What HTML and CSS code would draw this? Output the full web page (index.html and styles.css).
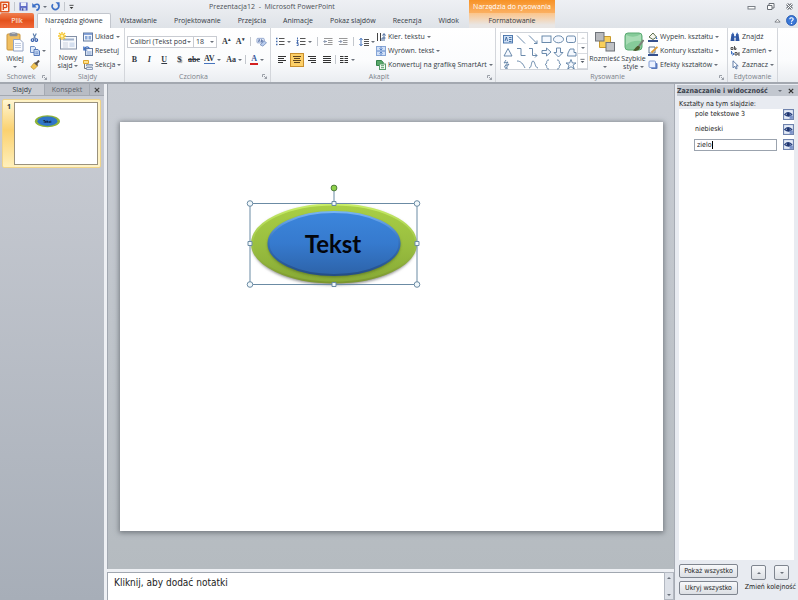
FILE: index.html
```html
<!DOCTYPE html>
<html lang="pl">
<head>
<meta charset="utf-8">
<title>Prezentacja12 - Microsoft PowerPoint</title>
<link rel="stylesheet" href="styles.css">
</head>
<body>
<div class="app">
  <header class="header">
    <div class="titlebar">
      <div class="quick">
        <svg class="logo" viewBox="0 0 10 12"><rect x="0" y="0.5" width="9.5" height="11" rx="1" fill="#e2571f"/><rect x="1.5" y="2" width="6.5" height="8" fill="#fff3ea"/><path d="M3.3 9V3.4h2a1.6 1.6 0 0 1 0 3.2h-2" fill="none" stroke="#d9481a" stroke-width="1.3"/></svg>
        <span class="sep"></span>
        <button aria-label="Zapisz"><svg viewBox="0 0 10 10" width="9" height="9"><path d="M.5.5h9v9h-9z" fill="#5a66c4"/><path d="M2 .5h6v4H2z" fill="#eef1fb"/><path d="M2.5 6.5h5v3h-5z" fill="#c9d0ee"/><path d="M3.5 7h1.3v2.5H3.5z" fill="#34408f"/></svg></button>
        <button aria-label="Cofnij"><svg viewBox="0 0 10 10" width="9" height="9"><path d="M2 4.5C4 1.5 8 1.8 8 5.2 8 7.2 6.5 8.8 4.8 9.3" fill="none" stroke="#3c6fc6" stroke-width="1.8"/><path d="M.3 1.2v5h5z" fill="#3c6fc6"/></svg><i class="dn"></i></button>
        <button aria-label="Powtórz"><svg viewBox="0 0 10 10" width="9" height="9"><path d="M2.2 2.4A3.6 3.6 0 1 0 7.8 2.6" fill="none" stroke="#3c6fc6" stroke-width="1.8"/><path d="M5 .2h4.5v4.5z" fill="#3c6fc6"/></svg></button>
        <span class="sep"></span>
        <button aria-label="Dostosuj"><svg viewBox="0 0 6 6" width="5" height="6"><path d="M.5 1h5" stroke="#333"/><path d="M.8 3h4.4L3 5.4z" fill="#333"/></svg></button>
      </div>
      <h1>Prezentacja12&nbsp; -&nbsp; Microsoft PowerPoint</h1>
    </div>
    <div class="context">Narzędzia do rysowania</div>
    <div class="window">
      <button aria-label="Minimalizuj"><svg viewBox="0 0 9 9" width="9" height="9"><rect x="1" y="4.5" width="7" height="2.5" fill="#fff" stroke="#7b8087"/></svg></button>
      <button aria-label="Przywróć"><svg viewBox="0 0 9 9" width="9" height="9"><path d="M3 1.5h5v4.5H3z" fill="#fff" stroke="#686d74"/><path d="M1.5 3.5h4.5v4H1.5z" fill="#fff" stroke="#686d74"/></svg></button>
      <button aria-label="Zamknij"><svg viewBox="0 0 9 9" width="9" height="9"><path d="M2 2l5 5M7 2L2 7" stroke="#72777e" stroke-width="2.8"/><path d="M2 2l5 5M7 2L2 7" stroke="#fff" stroke-width="1"/></svg></button>
    </div>
    <nav class="tabs">
      <button class="file">Plik</button>
      <button class="on">Narzędzia główne</button>
      <button>Wstawianie</button><button>Projektowanie</button><button>Przejścia</button><button>Animacje</button><button>Pokaz slajdów</button><button>Recenzja</button><button>Widok</button>
    </nav>
    <button class="format">Formatowanie</button>
    <div class="help">
      <button aria-label="Zwiń wstążkę"><svg viewBox="0 0 8 8" width="7" height="7"><path d="M1 5.8L4 2.5l3 3.3z" fill="#fff" stroke="#666b72" stroke-width=".9"/></svg></button>
      <button aria-label="Pomoc"><svg viewBox="0 0 12 12" width="11" height="11"><circle cx="6" cy="6" r="5.4" fill="#3b78d8" stroke="#255aaf"/><path d="M4.2 4.6C4.2 2.4 8 2.5 7.8 4.7 7.7 5.9 6.1 5.9 6 7.4M6 8.4v1.3" fill="none" stroke="#fff" stroke-width="1.3"/></svg></button>
    </div>
  </header>

  <section class="ribbon" aria-label="Wstążka">
    <div class="group g-clip">
      <div class="tools">
        <button class="big"><svg viewBox="0 0 18 20" width="18" height="20"><rect x="1" y="2" width="13" height="16" rx="1" fill="#f0bf61" stroke="#c9953f"/><rect x="3.5" y=".8" width="8" height="3.5" rx="1" fill="#8c8f97"/><rect x="5.5" y="0" width="4" height="2" rx="1" fill="#b7bac1"/><path d="M7.500 7.500h6.500l3 3v8.500H7.500z" fill="#fbfcff" stroke="#93a4c4"/><path d="M9 11.500h6M9 13.500h6M9 15.500h6" stroke="#b3bfd6" stroke-width=".8"/></svg><span>Wklej</span><i class="dn"></i></button>
        <div class="stack">
          <button aria-label="Wytnij"><svg viewBox="0 0 10 10" width="9" height="9"><path d="M3.500 .5L6 6.500M7 .5L4 6.500" stroke="#5d7fae" stroke-width="1.300"/><circle cx="2.800" cy="7.800" r="1.500" fill="none" stroke="#2c56a8" stroke-width="1.200"/><circle cx="7" cy="7.800" r="1.500" fill="none" stroke="#2c56a8" stroke-width="1.200"/></svg></button>
          <button aria-label="Kopiuj"><svg viewBox="0 0 10 10" width="10" height="10"><path d="M.5.5h4l1 1v5h-5z" fill="#dfe9f8" stroke="#6b8cc4"/><path d="M4 3.500h4l1.500 1.500v4.500H4z" fill="#c8daf5" stroke="#5478b8"/><path d="M5.300 6h3M5.300 7.700h3" stroke="#5478b8" stroke-width=".7"/></svg><i class="dn"></i></button>
          <button aria-label="Malarz formatów"><svg viewBox="0 0 10 10" width="10" height="10"><path d="M6 4l3-3.500" stroke="#5b5146" stroke-width="2"/><path d="M4 3l3.500 3L4 9.500.8 7z" fill="#f0c454" stroke="#c08f2b" stroke-width=".7"/><path d="M4.600 2.500l3.200 2.900" stroke="#5b5146" stroke-width="1.400"/></svg></button>
        </div>
      </div>
      <div class="caption"><span>Schowek</span><svg class="launch"><use href="#launch"/></svg></div>
    </div>

    <div class="group g-slides">
      <div class="tools">
        <button class="big"><svg viewBox="0 0 20 19" width="20" height="19"><rect x="2.500" y="4.500" width="16" height="12.500" fill="#f7f9fc" stroke="#8390a6"/><path d="M5 7.500h11" stroke="#9fb0cb" stroke-width="2"/><path d="M5 11h5M5 13h5M5 15h5" stroke="#c1cad9" stroke-width=".8"/><rect x="11.500" y="10.500" width="5" height="4.500" fill="#d4dfef"/><path d="M4 0v8M0 4h8M1 1l6 6M7 1L1 7" stroke="#f6c52e" stroke-width="1.400"/><circle cx="4" cy="4" r="1.500" fill="#fff5b8"/></svg><span>Nowy</span><span>slajd <i class="dn"></i></span></button>
        <div class="stack">
          <button><svg viewBox="0 0 10 10" width="10" height="10"><rect x=".5" y="1" width="9" height="8" fill="#f2f6fc" stroke="#637a9f"/><path d="M1 2h8" stroke="#6b8fcd" stroke-width="1.600"/><path d="M2 4h2.500v3.500H2zM5.500 4H8v3.500H5.500z" fill="#8aa9d8"/></svg>Układ <i class="dn"></i></button>
          <button><svg viewBox="0 0 10 10" width="10" height="10"><rect x="2.500" y="2.500" width="7" height="7" fill="#f2f6fc" stroke="#637a9f"/><path d="M3.500 6h5M3.500 8h5" stroke="#7596cb"/><path d="M.8.5v3.500h3.500M1 3.500C2.500 0 6 .4 6.500 3" fill="none" stroke="#3f6fc0" stroke-width="1.200"/></svg>Resetuj</button>
          <button><svg viewBox="0 0 10 10" width="10" height="10"><path d="M.5.5h5v3h-5z" fill="#ffe28b" stroke="#dfa62e"/><path d="M1.500 4v4.500h2" fill="none" stroke="#777"/><path d="M3.500 4.500h6v1.500h-6zM3.500 7.500h6V9.500h-6z" fill="#e8eef8" stroke="#7488a8" stroke-width=".8"/></svg>Sekcja <i class="dn"></i></button>
        </div>
      </div>
      <div class="caption"><span>Slajdy</span></div>
    </div>

    <div class="group g-font">
      <div class="tools rows">
        <div class="row">
          <span class="box face"><select aria-label="Czcionka"><option>Calibri (Tekst pod</option></select><i class="dn"></i></span><span class="box size"><select aria-label="Rozmiar czcionki"><option>18</option></select><i class="dn"></i></span>
          <button class="glyph grow" aria-label="Zwiększ czcionkę">A<sup>▴</sup></button><button class="glyph shrink" aria-label="Zmniejsz czcionkę">A<sup>▾</sup></button><span class="sep"></span>
          <button aria-label="Wyczyść formatowanie"><svg viewBox="0 0 12 10" width="11" height="10"><rect x="1" y="1" width="8" height="5" rx="1" fill="#e2e9f6" stroke="#7a93c2" stroke-width=".8"/><path d="M2.500 5l1-3 1 3M6 2v3h1.500V3.500H6" fill="none" stroke="#47649d" stroke-width=".8"/><path d="M4.500 8l4.500-4 2.500 1.800L7.500 9.500z" fill="#b9cdef" stroke="#7189b8" stroke-width=".8"/></svg></button>
        </div>
        <div class="row second">
          <button class="glyph">B</button><button class="glyph it">I</button><button class="glyph un">U</button><button class="glyph sh">S</button><button class="glyph st">abc</button><button class="glyph wide"><span class="av">AV</span><i class="dn"></i></button><button class="glyph wide">Aa<i class="dn"></i></button><span class="sep"></span><button class="glyph wide"><span class="color">A</span><i class="dn"></i></button>
        </div>
      </div>
      <div class="caption"><span>Czcionka</span><svg class="launch"><use href="#launch"/></svg></div>
    </div>

    <div class="group g-para">
      <div class="tools">
        <div class="rows">
          <div class="row">
            <button aria-label="Punktory"><svg class="ic"><use href="#bullets"/></svg><i class="dn"></i></button>
            <button aria-label="Numerowanie"><svg class="ic"><use href="#numbers"/></svg><i class="dn"></i></button><span class="sep"></span>
            <button aria-label="Zmniejsz wcięcie"><svg class="ic"><use href="#outdent"/></svg></button>
            <button aria-label="Zwiększ wcięcie"><svg class="ic"><use href="#indent"/></svg></button><span class="sep"></span>
            <button aria-label="Interlinia"><svg class="ic" viewBox="0 0 10 10"><path d="M2 1.500v7M.5 3L2 1.200 3.500 3M.5 7L2 8.800 3.500 7" fill="none" stroke="#4674bd"/><path d="M5 2.500h5M5 4.500h5M5 6.500h5M5 8.500h5" stroke="#555" stroke-width="1"/></svg><i class="dn"></i></button>
          </div>
          <div class="row second align">
            <button aria-label="Do lewej"><svg class="ic" viewBox="0 0 10 10"><path d="M1 1.500h8M1 3.500h6M1 5.500h8M1 7.500h5" stroke="#333"/></svg></button>
            <button aria-label="Do środka" class="sel"><svg class="ic" viewBox="0 0 10 10"><path d="M1 1.500h8M2 3.500h6M1 5.500h8M2 7.500h6" stroke="#5e4520"/></svg></button>
            <button aria-label="Do prawej"><svg class="ic" viewBox="0 0 10 10"><path d="M1 1.500h8M3 3.500h6M1 5.500h8M4 7.500h5" stroke="#333"/></svg></button>
            <button aria-label="Wyjustuj"><svg class="ic" viewBox="0 0 10 10"><path d="M1 1.500h8M1 3.500h8M1 5.500h8M1 7.500h8" stroke="#333"/></svg></button><span class="sep"></span>
            <button class="wide" aria-label="Kolumny"><svg class="ic" viewBox="0 0 10 10"><path d="M1 1.500h3.500M1 3.500h3.500M1 5.500h3.500M1 7.500h3.500M5.500 1.500H9M5.500 3.500H9M5.500 5.500H9M5.500 7.500H9" stroke="#333"/></svg><i class="dn"></i></button>
          </div>
        </div>
        <div class="stack">
          <button><svg viewBox="0 0 10 10" width="10" height="10"><path d="M1.500 1v8M4.500 1v8" stroke="#444"/><path d="M8 9V2M6.500 3.500L8 1.500l1.500 2M6 9V6h3.500" fill="none" stroke="#496a9c"/></svg>Kier. tekstu <i class="dn"></i></button>
          <button><svg viewBox="0 0 10 10" width="10" height="10"><rect x=".5" y=".5" width="9" height="9" fill="#d2e1f7" stroke="#86a5d6"/><path d="M5 .5v3M5 9.500v-3M3.500 2.500L5 4l1.500-1.500M3.500 7.500L5 6l1.500 1.500M1 5h8" fill="none" stroke="#4f7bc2" stroke-width=".9"/></svg>Wyrówn. tekst <i class="dn"></i></button>
          <button><svg viewBox="0 0 10 10" width="10" height="10"><path d="M.5.5h5l2 2.500-2 2.500h-5z" fill="#58a869" stroke="#33814a"/><rect x="3.500" y="4" width="6" height="5.500" fill="#f3faf3" stroke="#5a9d6c"/><path d="M5 5.700h3M5 7.700h3" stroke="#5a9d6c"/></svg>Konwertuj na grafikę SmartArt <i class="dn"></i></button>
        </div>
      </div>
      <div class="caption"><span>Akapit</span><svg class="launch"><use href="#launch"/></svg></div>
    </div>

    <div class="group g-draw">
      <div class="tools">
        <div class="gallery">
          <svg viewBox="0 0 76 38" width="76" height="38" fill="#f5f9ff" stroke="#5b7ea3" stroke-width=".9">
            <rect x="2.500" y="2.500" width="9" height="7.500" fill="#cfe0f5" stroke="#426fa8"/><path d="M4 8l1.300-4 1.300 4M8 4.500h2.500M8 6.500h2.500M8 8.500h2.500" fill="none" stroke="#2b5a96" stroke-width=".8"/>
            <path d="M16 2.500l8 8M28 2.500l8 8M36 7.500v3h-3" fill="none"/><rect x="41" y="3" width="9" height="6.500"/><ellipse cx="57.500" cy="6.300" rx="5" ry="3.500"/><rect x="65.500" y="3" width="9" height="6.500" rx="1.800"/>
            <path d="M7 15.500l4 7.500H3z"/><path d="M16 15.500h4v7h4.500M28 15.500h3.500v7H36M34 20.500l2 2-2 2" fill="none"/><path d="M41 17.500h4.500V15l4.500 4-4.500 4v-2.500H41zM55.500 15h4v4.500H62L57.500 24 53 19.500h2.500zM67 20l2-4h4v3.500h2V23h-8.500z"/>
            <path d="M5 27l-2 3 4-1-3 4 4-2-3 4M3.500 33l1 2.500 2.500-.5" fill="none"/><path d="M16 28c4 0 6 3 8 7M28 35c3 0 2-7 4-7s2 7 5 7M48 27c-3 0-2 2-2.500 3.500L44 31.500l1.500 1c.5 1.500-.5 3.500 2.500 3.500M56 27c3 0 2 2 2.500 3.500l1.500 1-1.500 1C58 34 59 36 56 36" fill="none"/><path d="M70 26.500l1.400 3.500h3.600l-3 2.200 1.200 3.800-3.200-2.300-3.200 2.300 1.200-3.800-3-2.200h3.600z"/>
          </svg>
          <div class="scroller"><button aria-label="W górę" disabled><i class="up"></i></button><button aria-label="W dół"><i class="dn"></i></button><button aria-label="Więcej"><svg viewBox="0 0 6 6" width="5" height="6"><path d="M.5 1h5" stroke="#555c66"/><path d="M.8 3h4.400L3 5.400z" fill="#555c66"/></svg></button></div>
        </div>
        <button class="big"><svg viewBox="0 0 20 20" width="20" height="20"><path d="M4.500 4.500h11v11h-11z" fill="#f8cf5b" stroke="#c99a2c"/><rect x=".5" y=".5" width="8.500" height="8.500" fill="#b8babe" stroke="#6f7379"/><rect x="11" y="10.500" width="8.500" height="8.500" fill="#c0c2c6" stroke="#6f7379"/></svg><span>Rozmieść</span><i class="dn"></i></button>
        <button class="big"><svg viewBox="0 0 20 20" width="20" height="20"><rect x="1" y="1" width="17" height="17" rx="3" fill="#86cb9a" stroke="#5aaa73"/><path d="M2 3q8 4 15-1v7Q8 8 2 13z" fill="#a8dcb5"/><path d="M19.500 8l-6 8" stroke="#7c8079" stroke-width="2"/><path d="M14.500 14c-2-.5-3 2.500-5.500 4.500 4 1.500 7-1 7-3.500z" fill="#4b5c2c"/></svg><span>Szybkie</span><span>style <i class="dn"></i></span></button>
        <div class="stack">
          <button><svg viewBox="0 0 10 10" width="10" height="10"><path d="M1 5l4-4 3.500 4L5 7.500z" fill="#f6f6ee" stroke="#5d6f4d"/><path d="M8 4l1.500 3H8z" fill="#3870c4"/><path d="M0 9h10" stroke="#35508e" stroke-width="2"/></svg>Wypełn. kształtu <i class="dn"></i></button>
          <button><svg viewBox="0 0 10 10" width="10" height="10"><path d="M1 1h6v6H1z" fill="#fff" stroke="#5f748f"/><path d="M3.500 6.500L9.500 .8" stroke="#df9b33" stroke-width="1.800"/><path d="M0 9h10" stroke="#35508e" stroke-width="2"/></svg>Kontury kształtu <i class="dn"></i></button>
          <button><svg viewBox="0 0 10 10" width="10" height="10"><rect x="3" y="3" width="6.500" height="6" rx="1" fill="#5878bd"/><rect x="1" y="1" width="6.500" height="6.500" rx="1" fill="#eaf1ff" stroke="#7f9bd4"/></svg>Efekty kształtów <i class="dn"></i></button>
        </div>
      </div>
      <div class="caption"><span>Rysowanie</span><svg class="launch"><use href="#launch"/></svg></div>
    </div>

    <div class="group g-edit">
      <div class="tools">
        <div class="stack">
          <button><svg viewBox="0 0 10 10" width="10" height="10"><path d="M1.500 2h2.500L4.500 9H.5zM6 2h2.500l1 7h-4z" fill="#2f57a3"/><path d="M4 4h2v2H4zM2 .8h1.500v1.500H2zM6.500.8H8v1.500H6.500z" fill="#5b83c8"/></svg>Znajdź</button>
          <button><svg viewBox="0 0 10 10" width="10" height="10"><path d="M1 3.500h2v-2H1v2M4.500 0v3.500h1.500V2H4.500M5 6.500h2V9H5zM8 9V7h2M8 9h2" fill="none" stroke="#444" stroke-width=".9"/><path d="M1.500 5v3h2M2.500 6.500L4 8 2.500 9.500" fill="none" stroke="#3f71c1"/></svg>Zamień <i class="dn"></i></button>
          <button><svg viewBox="0 0 10 10" width="10" height="10"><path d="M3 .8v7l1.800-1.500L6 9l1.200-.6L6 5.900h2.200z" fill="#fff" stroke="#51719f" stroke-width=".9"/></svg>Zaznacz <i class="dn"></i></button>
        </div>
      </div>
      <div class="caption"><span>Edytowanie</span></div>
    </div>
  </section>

  <main class="work">
    <aside class="slides">
      <div class="sidetabs"><button class="on">Slajdy</button><button>Konspekt</button><button class="close" aria-label="Zamknij panel"><svg viewBox="0 0 6 6" width="6" height="6"><path d="M.8.8l4.400 4.400M5.200.8L.8 5.200" stroke="#444" stroke-width="1.200"/></svg></button></div>
      <div class="thumb"><b>1</b>
        <svg viewBox="0 0 543 409"><rect width="543" height="409" fill="#fff"/><ellipse cx="214" cy="122" rx="84" ry="40" fill="#8fb43a"/><ellipse cx="214" cy="122" rx="67" ry="32" fill="#2f75c8"/><text x="214" y="131" class="tekst">Tekst</text></svg>
      </div>
    </aside>
    <div class="editor">
      <div class="canvas">
        <svg class="slide" viewBox="0 0 543 409">
          <defs>
            <linearGradient id="green" x2="0" y2="1"><stop offset="0" stop-color="#a9cf45"/><stop offset=".5" stop-color="#9abf40"/><stop offset="1" stop-color="#87a935"/></linearGradient>
            <linearGradient id="blue" x2="0" y2="1"><stop offset="0" stop-color="#3c86dc"/><stop offset=".5" stop-color="#367ace"/><stop offset="1" stop-color="#2d63a9"/></linearGradient>
            <linearGradient id="rimg" x2="0" y2="1"><stop offset="0" stop-color="#c9ee68"/><stop offset=".5" stop-color="#9fc548"/><stop offset="1" stop-color="#7b962e"/></linearGradient>
            <linearGradient id="rimb" x2="0" y2="1"><stop offset="0" stop-color="#76b3f4"/><stop offset=".5" stop-color="#346fba"/><stop offset="1" stop-color="#244e87"/></linearGradient>
            <filter id="soft" x="-10%" y="-10%" width="120%" height="130%"><feGaussianBlur stdDeviation="1.500"/></filter>
          </defs>
          <ellipse cx="214" cy="123" rx="82" ry="40" fill="#888" filter="url(#soft)"/>
          <ellipse cx="214" cy="121.500" rx="82" ry="39" fill="url(#green)" stroke="url(#rimg)" stroke-width="2"/>
          <ellipse cx="214" cy="123" rx="66" ry="32" fill="#5b7626" filter="url(#soft)"/>
          <ellipse cx="214" cy="121.500" rx="65.500" ry="31.500" fill="url(#blue)" stroke="url(#rimb)" stroke-width="2"/>
          <text x="213" y="131" class="tekst">Tekst</text>
          <g fill="#f1f8fb" stroke="#6b8ba4" stroke-width="1">
            <path d="M130 81.500h167v81H130zM214 81.500V69" fill="none"/>
            <circle cx="130" cy="81.500" r="2.800"/><circle cx="297" cy="81.500" r="2.800"/><circle cx="130" cy="162.500" r="2.800"/><circle cx="297" cy="162.500" r="2.800"/>
            <path d="M212 79.500h4v4h-4zM212 160.500h4v4h-4zM128 119.500h4v4h-4zM295 119.500h4v4h-4z"/>
            <circle cx="214" cy="66" r="2.900" fill="#8fd14a" stroke="#4f7d3c"/>
          </g>
        </svg>
      </div>
      <div class="notes"><p>Kliknij, aby dodać notatki</p><div class="bar"><i class="up"></i><i class="dn"></i></div></div>
    </div>
    <aside class="pane">
      <h2>Zaznaczanie i widoczność <span><i class="dn"></i><svg viewBox="0 0 6 6" width="6" height="6"><path d="M.8.8l4.400 4.400M5.200.8L.8 5.200" stroke="#333" stroke-width="1.200"/></svg></span></h2>
      <h3>Kształty na tym slajdzie:</h3>
      <ul>
        <li><span>pole tekstowe 3</span><button aria-label="Widoczność"><svg><use href="#eye"/></svg></button></li>
        <li><span>niebieski</span><button aria-label="Widoczność"><svg><use href="#eye"/></svg></button></li>
        <li class="edit"><label><input value="zielo" aria-label="Nazwa kształtu" size="5"><i class="cursor"></i></label><button aria-label="Widoczność"><svg><use href="#eye"/></svg></button></li>
      </ul>
      <footer>
        <div class="all"><button>Pokaż wszystko</button><button>Ukryj wszystko</button></div>
        <div class="order"><div><button aria-label="Do przodu"><i class="up"></i></button><button aria-label="Do tyłu"><i class="dn"></i></button></div><span>Zmień kolejność</span></div>
      </footer>
    </aside>
  </main>
</div>

<svg class="defs" aria-hidden="true">
  <symbol id="launch" viewBox="0 0 5 5"><path d="M.5 3V.5H3M2 2l2.500 2.500M4.500 2.500v2h-2" fill="none" stroke="#858b94" stroke-width=".8"/></symbol>
  <symbol id="bullets" viewBox="0 0 10 10"><path d="M1 1.500h1.500M1 4.500h1.500M1 7.500h1.500" stroke="#456cab" stroke-width="1.500"/><path d="M4 1.500h5.500M4 4.500h5.500M4 7.500h5.500" stroke="#555"/></symbol>
  <symbol id="numbers" viewBox="0 0 10 10"><path d="M1.500.5v2M.7 3.500h1.500L.8 5.500h1.500M.7 6.500h1.500v2H.7" fill="none" stroke="#355fa5" stroke-width=".9"/><path d="M4 1.500h5.500M4 4.500h5.500M4 7.500h5.500" stroke="#555"/></symbol>
  <symbol id="outdent" viewBox="0 0 10 10"><path d="M1 1.500h8.500M5 3.500h4.500M5 5.500h4.500M1 7.500h8.500" stroke="#999"/><path d="M4 4.500H.8M2.300 3L.8 4.500 2.300 6" fill="none" stroke="#8a98b0"/></symbol>
  <symbol id="indent" viewBox="0 0 10 10"><path d="M1 1.500h8.500M5 3.500h4.500M5 5.500h4.500M1 7.500h8.500" stroke="#999"/><path d="M.5 4.500h3.300M2.300 3l1.500 1.500L2.300 6" fill="none" stroke="#8a98b0"/></symbol>
  <symbol id="eye" viewBox="0 0 10 10"><rect x=".5" y=".5" width="9" height="9" fill="#e4ebf8" stroke="#6f83ad"/><path d="M1.500 5Q4.500 1.500 8 5 5 8 1.500 5z" fill="#fff" stroke="#26407d"/><circle cx="4.800" cy="5" r="1.500" fill="#1d3470"/><path d="M6 6h3v3H6z" fill="#7c93c9"/></symbol>
</svg>
</body>
</html>
```
FILE: styles.css
```css
* { box-sizing: border-box; }
html, body { height: 100%; margin: 0; }
body { font: 7px/10px "Open Sans", "Noto Sans", sans-serif; color: #333a44; overflow: hidden; }
button { border: 0; padding: 0; margin: 0; background: none; font: inherit; color: inherit; white-space: nowrap; }
h1, h2, h3, p, ul { margin: 0; padding: 0; font: inherit; list-style: none; }
svg { display: block; flex: none; }
.defs { position: absolute; width: 0; height: 0; }
.app { display: flex; flex-direction: column; min-height: 100%; }
.dn, .up { display: inline-block; flex: none; border: 2px solid transparent; border-top-color: #6b717a; border-bottom: 0; vertical-align: middle; }
.up { border-top: 0; border-bottom: 2px solid #6b717a; }
.sep { flex: none; width: 1px; height: 9px; background: #c3c7cd; }

/* title bar and tabs */
.header { display: grid; grid-template-columns: 469px 86px 1fr; grid-template-rows: 13px 15px; background: linear-gradient(#eef0f4, #dfe3e8); }
.titlebar { display: flex; align-items: center; }
.quick { display: flex; align-items: center; gap: 4px; width: 75px; }
.quick button { display: flex; align-items: center; gap: 2px; }
.logo { width: 10px; height: 12px; }
h1 { flex: 1; text-align: center; color: #4b4f55; }
.context { background: linear-gradient(#f79226, #fbb062); color: #fff; text-align: center; line-height: 14px; }
.format { background: linear-gradient(#fcc58a, #e9e6e4 80%); }
.window, .help { display: flex; justify-content: flex-end; align-items: center; gap: 10px; padding-right: 4px; }
.help { gap: 5px; padding-right: 1px; }
.tabs { display: flex; gap: 1px; }
.tabs button { padding: 0 8px; }
.tabs .file { width: 34px; margin-right: 2px; padding: 0; color: #fff; background: linear-gradient(#f08050, #e4511c 50%, #f0693a); border-radius: 2px 2px 0 0; }
.tabs .on { background: #fff; border: 1px solid #c2c6cd; border-bottom: 0; border-radius: 2px 2px 0 0; padding: 0 7px; }

/* ribbon */
.ribbon { display: flex; flex: none; height: 56px; background: linear-gradient(#fff, #fbfcfd 60%, #eaedf1); border-bottom: 2px solid #a3a8b0; }
.group { display: flex; flex-direction: column; flex: none; border-right: 1px solid #d3d6db; }
.g-clip { width: 51px; } .g-slides { width: 74px; } .g-font { width: 146px; } .g-para { width: 225px; } .g-draw { width: 232px; } .g-edit { width: 50px; }
.tools { display: flex; flex: 1; padding: 2px 2px 0; }
.tools button { display: flex; align-items: center; gap: 2px; }
.caption { display: flex; justify-content: center; align-items: center; height: 11px; color: #7b818a; }
.caption span { flex: 1; text-align: center; }
.launch { width: 5px; height: 5px; margin-right: 3px; }
.stack { display: flex; flex-direction: column; }
.stack button { height: 14px; }
.tools .big { flex-direction: column; gap: 0; width: 30px; padding-top: 2px; line-height: 8px; }
.big svg { margin-bottom: 3px; }
.big > .dn { margin-top: 3px; }
.g-clip .big { width: 26px; }
.g-clip .stack { padding-left: 2px; }
.rows { flex-direction: column; }
.row { display: flex; align-items: center; height: 17px; margin-top: 3px; gap: 5px; }
.row.second { margin-top: 1px; }
.box { display: flex; align-items: center; height: 12px; padding: 0 2px; background: #fff; border: 1px solid #c9ccd2; }
.box select { appearance: none; flex: 1; min-width: 0; height: 10px; border: 0; padding: 0; background: none; font: inherit; color: inherit; }
.face { width: 67px; } .size { width: 24px; margin-left: -6px; }
.glyph { font: bold 8px/10px "Liberation Serif", serif; }
.tools .glyph { font: bold 8px/10px "Liberation Serif", serif; }
.glyph sup { font-size: 5px; line-height: 5px; align-self: flex-start; }
.tools .grow, .tools .shrink { gap: 0; }
.g-font .second { gap: 0; }
.second .glyph { width: 15px; justify-content: center; }
.second .glyph.wide { width: 22px; }
.tools .it { font-style: italic; } .un { text-decoration: underline; } .sh { text-shadow: 1px 1px 1px #777; } .st { text-decoration: line-through; }
.av { border-bottom: 1px solid #4674bd; line-height: 8px; }
.color { padding: 0 1px; border-bottom: 2px solid #d32020; color: #36589a; line-height: 8px; }
.ic { width: 10px; height: 10px; }
.g-para .rows { width: 103px; padding-left: 2px; }
.align button { width: 14px; height: 14px; justify-content: center; }
.row.align { gap: 1px; }
.align .sel { background: #fdd068; border: 1px solid #c98f2d; }
.align .wide { width: 20px; }
.gallery { display: flex; width: 88px; height: 38px; margin: 2px 2px 0; border: 1px solid #cfd3d9; background: #fff; }
.gallery > svg { width: 76px; }
.scroller { display: grid; flex: 1; }
.scroller button { justify-content: center; border: 1px solid #d9dce1; border-width: 0 0 1px 1px; }
.scroller .up { opacity: .3; }
.g-draw .big { width: 29px; }

/* workspace */
.work { display: flex; flex: 1; }
.slides { flex: none; width: 104px; background: linear-gradient(#cbced5, #a7aeb8); }
.sidetabs { display: flex; height: 12px; background: #b8bcc4; border-bottom: 1px solid #a4a9b2; }
.sidetabs button { flex: 1; border-right: 1px solid #a4a9b2; color: #5c626b; }
.sidetabs .on { background: #cbced5; color: #333a44; }
.sidetabs .close { flex: 0 0 14px; display: grid; place-items: center; border: 0; }
.thumb { display: flex; margin: 3px 3px 0 2px; padding: 2px; height: 69px; border: 1px solid #f0d489; border-radius: 2px; background: linear-gradient(90deg, transparent 12px, #fff3c7 12px), linear-gradient(#fff6d2, #fbd16f 45%, #fff0bb); }
.thumb b { width: 9px; padding-left: 2px; }
.thumb svg { flex: 1; height: 63px; min-width: 0; border: 1px solid #9a927d; background: #fff; }
.tekst { font: bold 24px Lato, sans-serif; text-anchor: middle; fill: #04060c; }
.editor { display: flex; flex-direction: column; flex: 1; min-width: 0; border-left: 3px solid #eef0f4; }
.canvas { display: flex; flex: 1; align-items: center; justify-content: center; background: linear-gradient(#c9cdd4, #b5bbc0); border-left: 1px solid #a1a7b0; }
.slide { width: calc(100% - 23px); background: #fff; box-shadow: 0 1px 5px 1px #747a80; }
.notes { display: flex; flex: none; height: 31px; border-top: 3px solid #eef0f4; background: #fff; }
.notes p { flex: 1; padding: 3px 6px; border: 1px solid #a1a7b0; border-width: 1px 0 0 1px; font: 10px/13px "DejaVu Sans Condensed", "DejaVu Sans", sans-serif; color: #222; }
.bar { display: flex; flex-direction: column; align-items: center; justify-content: space-between; width: 10px; padding: 4px 0 3px; background: #dde1e8; border: 1px solid #b3b8c1; }

/* selection pane */
.pane { display: flex; flex-direction: column; flex: none; width: 124px; padding: 1px 4px 5px 4px; background: #e8ebf1; border-left: 1px solid #a7acb5; font: 7px/10px "DejaVu Sans Condensed", "DejaVu Sans", sans-serif; color: #222; }
.pane h2 { display: flex; justify-content: space-between; align-items: center; height: 11px; margin: 0 -4px 0 -2px; padding: 0 4px 0 0; background: #c2c7cf; font-weight: bold; color: #3c434e; white-space: nowrap; }
.pane h2 span { display: flex; align-items: center; gap: 6px; }
.pane h3 { padding: 3px 0 0; line-height: 10px; }
.pane ul { flex: 1; background: #fff; }
.pane li { display: flex; justify-content: space-between; height: 15px; padding-left: 16px; align-items: flex-start; line-height: 11px; }
.pane li svg { width: 11px; height: 11px; }
.pane li.edit { padding-left: 15px; }
.edit label { display: flex; align-items: center; flex: 1; height: 12px; margin-right: 6px; padding-left: 2px; border: 1px solid #9ba3ae; background: #fff; }
.edit input { field-sizing: content; border: 0; padding: 0; background: none; font: inherit; color: inherit; height: 10px; }
.cursor { width: 1px; height: 8px; background: #000; }
.pane footer { display: flex; justify-content: space-between; padding-top: 4px; }
.all { display: grid; gap: 3px; width: 59px; }
.pane footer button { height: 14px; border: 1px solid #7f858f; border-radius: 2px; background: linear-gradient(#f7f8fa, #dcdfe4); }
.order { display: flex; flex-direction: column; align-items: center; gap: 3px; white-space: nowrap; margin-right: -2px; line-height: 8px; }
.order div { display: flex; gap: 8px; padding-top: 1px; }
.pane .order button { width: 15px; height: 15px; display: grid; place-items: center; }
```
